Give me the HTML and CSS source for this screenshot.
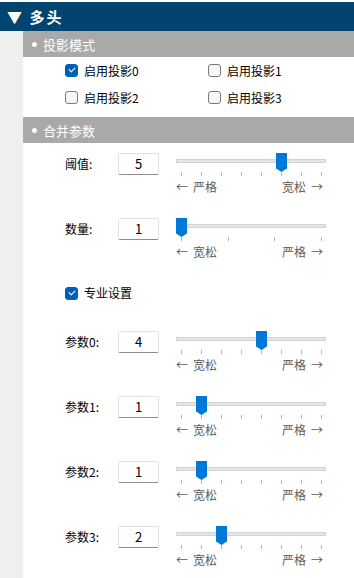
FILE: index.html
```html
<!DOCTYPE html>
<html lang="zh-CN">
<head>
    <meta charset="UTF-8">
    <meta name="viewport" content="width=device-width, initial-scale=1.0">
    <title>多头</title>
    <link rel="stylesheet" href="styles.css">
</head>
<body class="mainBody">
    <div class="titleBar">▼ 多头</div>
    <div class="panel">
        <div class="content">
            <div class="sectionHead"><span class="dot"></span>投影模式</div>
            <div class="checkGrid">
                <label class="check"><span class="box on"></span>启用投影0</label>
                <label class="check"><span class="box"></span>启用投影1</label>
                <label class="check"><span class="box"></span>启用投影2</label>
                <label class="check"><span class="box"></span>启用投影3</label>
            </div>
            <div class="sectionHead"><span class="dot"></span>合并参数</div>
            <div class="params">
                <div class="paramRow">
                    <span class="paramLabel">阈值:</span>
                    <span class="valueBox">5</span>
                    <div class="slider">
                        <div class="track"></div>
                        <div class="ticks"></div>
                        <div class="scale"><span><i class="arrow">←</i>严格</span><span>宽松<i class="arrow right">→</i></span></div>
                        <span class="thumb" style="left: 100px"></span>
                    </div>
                </div>
                <div class="paramRow">
                    <span class="paramLabel">数量:</span>
                    <span class="valueBox">1</span>
                    <div class="slider">
                        <div class="track"></div>
                        <div class="ticks ticks4"></div>
                        <div class="scale"><span><i class="arrow">←</i>宽松</span><span>严格<i class="arrow right">→</i></span></div>
                        <span class="thumb" style="left: 0px"></span>
                    </div>
                </div>
                <div class="proRow">
                    <label class="check"><span class="box on"></span>专业设置</label>
                </div>
                <div class="paramRow">
                    <span class="paramLabel">参数0:</span>
                    <span class="valueBox">4</span>
                    <div class="slider">
                        <div class="track"></div>
                        <div class="ticks"></div>
                        <div class="scale"><span><i class="arrow">←</i>宽松</span><span>严格<i class="arrow right">→</i></span></div>
                        <span class="thumb" style="left: 80px"></span>
                    </div>
                </div>
                <div class="paramRow">
                    <span class="paramLabel">参数1:</span>
                    <span class="valueBox">1</span>
                    <div class="slider">
                        <div class="track"></div>
                        <div class="ticks"></div>
                        <div class="scale"><span><i class="arrow">←</i>宽松</span><span>严格<i class="arrow right">→</i></span></div>
                        <span class="thumb" style="left: 20px"></span>
                    </div>
                </div>
                <div class="paramRow">
                    <span class="paramLabel">参数2:</span>
                    <span class="valueBox">1</span>
                    <div class="slider">
                        <div class="track"></div>
                        <div class="ticks"></div>
                        <div class="scale"><span><i class="arrow">←</i>宽松</span><span>严格<i class="arrow right">→</i></span></div>
                        <span class="thumb" style="left: 20px"></span>
                    </div>
                </div>
                <div class="paramRow">
                    <span class="paramLabel">参数3:</span>
                    <span class="valueBox">2</span>
                    <div class="slider">
                        <div class="track"></div>
                        <div class="ticks"></div>
                        <div class="scale"><span><i class="arrow">←</i>宽松</span><span>严格<i class="arrow right">→</i></span></div>
                        <span class="thumb" style="left: 40px"></span>
                    </div>
                </div>
            </div>
        </div>
    </div>
</body>
</html>
```

FILE: styles.css
```css
html, body {
    margin: 0;
    padding: 0;
    height: 100%;
    overflow: hidden;
}
.mainBody {
    display: flex;
    flex-direction: column;
    background-color: #fff;
    font-family: "Noto Sans CJK SC", "Liberation Sans", sans-serif;
    font-size: 12px;
    color: #000;
}
.titleBar {
    margin-top: 2px;
    height: 29px;
    line-height: 29px;
    padding-left: 7px;
    background-color: #00446f;
    color: #fff;
    font-size: 15px;
    font-weight: bold;
    letter-spacing: 2px;
}
.panel {
    flex: 1;
    padding-left: 23px;
    background-color: #efefef;
}
.content {
    height: 100%;
    background-color: #fff;
}
.sectionHead {
    display: flex;
    align-items: center;
    height: 26px;
    padding-left: 9px;
    background-color: #a9a9a9;
    color: #fff;
    font-size: 13px;
}
.dot {
    width: 5px;
    height: 5px;
    margin-right: 6px;
    border-radius: 50%;
    background-color: #fff;
}
.checkGrid {
    display: grid;
    grid-template-columns: 143px auto;
    grid-auto-rows: 27px;
    padding-left: 42px;
    padding-bottom: 6px;
}
.check {
    display: flex;
    align-items: center;
    gap: 6px;
    line-height: 14px;
}
.box {
    position: relative;
    box-sizing: border-box;
    width: 13px;
    height: 13px;
    border: 1px solid #7a7a7a;
    border-radius: 3px;
    background-color: #f7f7f7;
}
.box.on {
    border-color: #005fb8;
    background-color: #005fb8;
}
.box.on::after {
    content: "";
    position: absolute;
    left: 3px;
    top: 2px;
    width: 5px;
    height: 3px;
    border-left: 1px solid #fff;
    border-bottom: 1px solid #fff;
    transform: rotate(-45deg);
}
.params {
    padding-top: 10px;
    padding-left: 42px;
}
.paramRow {
    display: flex;
    align-items: flex-start;
    height: 65px;
}
.paramLabel {
    width: 53px;
    line-height: 21px;
}
.valueBox {
    box-sizing: border-box;
    width: 41px;
    height: 22px;
    line-height: 20px;
    text-align: center;
    font-size: 13px;
    border: 1px solid #e2e2e2;
    border-bottom-color: #8d8d8d;
    border-radius: 2px;
}
.slider {
    position: relative;
    display: flex;
    flex-direction: column;
    width: 150px;
    margin-left: 17px;
}
.track {
    box-sizing: border-box;
    margin-top: 6px;
    height: 4px;
    background-color: #e6e6e6;
    border: 1px solid #d3d3d3;
}
.ticks {
    margin-top: 9px;
    margin-left: 5px;
    width: 141px;
    height: 4px;
    background: repeating-linear-gradient(to right, #b4b4b4 0 1px, transparent 1px 20px);
}
.ticks4 {
    background: repeating-linear-gradient(to right, #b4b4b4 0 1px, transparent 1px 46.667px);
}
.scale {
    display: flex;
    justify-content: space-between;
    margin-top: 3px;
    padding-right: 3px;
    line-height: 16px;
    color: #5c5c5c;
}
.arrow {
    font-style: normal;
    margin-right: 5px;
}
.arrow.right {
    margin-right: 0;
    margin-left: 5px;
}
.thumb {
    position: absolute;
    top: 0;
    width: 11px;
    height: 19px;
    background-color: #0078d7;
    clip-path: polygon(0 0, 100% 0, 100% 82%, 50% 100%, 0 82%);
}
.proRow {
    height: 48px;
    padding-top: 3px;
    box-sizing: border-box;
}
```
